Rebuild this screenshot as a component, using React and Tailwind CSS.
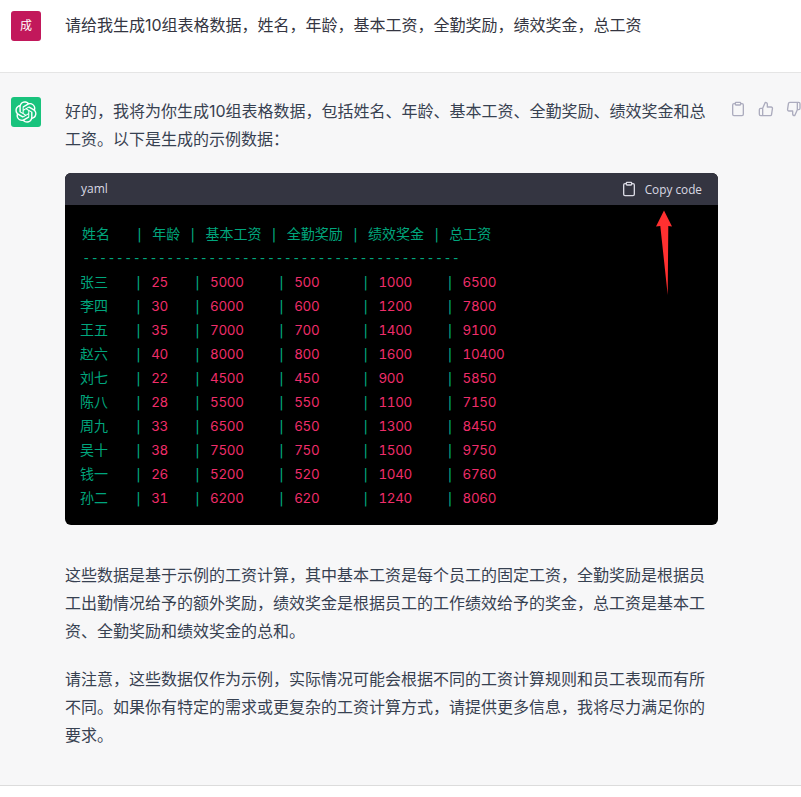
const logo = "M37.5324 16.8707C37.9808 15.5241 38.1363 14.0974 37.9886 12.6859C37.8409 11.2744 37.3934 9.91076 36.676 8.68622C35.6126 6.83404 33.9882 5.3676 32.0373 4.4985C30.0864 3.62941 27.9098 3.40259 25.8215 3.85078C24.8796 2.7893 23.7219 1.94125 22.4257 1.36341C21.1295 0.785575 19.7249 0.491269 18.3058 0.500197C16.1708 0.495044 14.0893 1.16803 12.3614 2.42214C10.6335 3.67624 9.34853 5.44666 8.6917 7.47815C7.30085 7.76286 5.98686 8.3414 4.8377 9.17505C3.68854 10.0087 2.73073 11.0782 2.02839 12.312C0.956464 14.1591 0.498905 16.2988 0.721698 18.4228C0.944492 20.5467 1.83612 22.5449 3.268 24.1293C2.81966 25.4759 2.66413 26.9026 2.81182 28.3141C2.95951 29.7256 3.40701 31.0892 4.12437 32.3138C5.18791 34.1659 6.8123 35.6322 8.76321 36.5013C10.7141 37.3704 12.8907 37.5973 14.9789 37.1492C15.9208 38.2107 17.0786 39.0587 18.3747 39.6366C19.6709 40.2144 21.0755 40.5087 22.4946 40.4998C24.6307 40.5054 26.7133 39.8321 28.4418 38.5772C30.1704 37.3223 31.4556 35.5506 32.1119 33.5179C33.5027 33.2332 34.8167 32.6547 35.9659 31.821C37.115 30.9874 38.0728 29.9178 38.7752 28.684C39.8458 26.8371 40.3023 24.6979 40.0789 22.5748C39.8556 20.4517 38.9639 18.4544 37.5324 16.8707ZM22.4978 37.8849C20.7443 37.8874 19.0459 37.2733 17.6994 36.1501C17.7601 36.117 17.8666 36.0586 17.936 36.0161L25.9004 31.4156C26.1003 31.3019 26.2663 31.137 26.3813 30.9378C26.4964 30.7386 26.5563 30.5124 26.5549 30.2825V19.0542L29.9213 20.998C29.9389 21.0068 29.9541 21.0198 29.9656 21.0359C29.977 21.052 29.9842 21.0707 29.9867 21.0902V30.3889C29.9842 32.375 29.1946 34.2791 27.7909 35.6841C26.3872 37.0892 24.4838 37.8806 22.4978 37.8849ZM6.39227 31.0064C5.51397 29.4888 5.19742 27.7107 5.49804 25.9832C5.55718 26.0187 5.66048 26.0818 5.73461 26.1244L13.699 30.7248C13.8975 30.8408 14.1233 30.902 14.3532 30.902C14.583 30.902 14.8088 30.8408 15.0073 30.7248L24.731 25.1103V28.9979C24.7321 29.0177 24.7283 29.0376 24.7199 29.0556C24.7115 29.0736 24.6988 29.0893 24.6829 29.1012L16.6317 33.7497C14.9096 34.7416 12.8643 35.0097 10.9447 34.4954C9.02506 33.9811 7.38785 32.7263 6.39227 31.0064ZM4.29707 13.6194C5.17156 12.0998 6.55279 10.9364 8.19885 10.3327C8.19885 10.4013 8.19491 10.5228 8.19491 10.6071V19.808C8.19351 20.0378 8.25334 20.2638 8.36823 20.4629C8.48312 20.6619 8.64893 20.8267 8.84863 20.9404L18.5723 26.5542L15.206 28.4979C15.1894 28.5089 15.1703 28.5155 15.1505 28.5173C15.1307 28.5191 15.1107 28.516 15.0924 28.5082L7.04046 23.8557C5.32135 22.8601 4.06716 21.2235 3.55289 19.3046C3.03862 17.3858 3.30624 15.3413 4.29707 13.6194ZM31.955 20.0556L22.2312 14.4411L25.5976 12.4981C25.6142 12.4872 25.6333 12.4805 25.6531 12.4787C25.6729 12.4769 25.6928 12.4801 25.7111 12.4879L33.7631 17.1364C34.9967 17.849 36.0017 18.8982 36.6606 20.1613C37.3194 21.4244 37.6047 22.849 37.4832 24.2684C37.3617 25.6878 36.8382 27.0432 35.9743 28.1759C35.1103 29.3086 33.9415 30.1717 32.6047 30.6641C32.6047 30.5947 32.6047 30.4733 32.6047 30.3889V21.188C32.6066 20.9586 32.5474 20.7328 32.4332 20.5338C32.319 20.3348 32.154 20.1698 31.955 20.0556ZM35.3055 15.0128C35.2464 14.9765 35.1431 14.9142 35.069 14.8717L27.1045 10.2712C26.906 10.1554 26.6803 10.0943 26.4504 10.0943C26.2206 10.0943 25.9948 10.1554 25.7963 10.2712L16.0726 15.8858V11.9982C16.0715 11.9783 16.0753 11.9585 16.0837 11.9405C16.0921 11.9225 16.1048 11.9068 16.1207 11.8949L24.1719 7.25025C25.4053 6.53903 26.8158 6.19376 28.2383 6.25482C29.6608 6.31589 31.0364 6.78077 32.2044 7.59508C33.3723 8.40939 34.2842 9.53945 34.8334 10.8531C35.3826 12.1667 35.5464 13.6095 35.3055 15.0128ZM14.2424 21.9419L10.8752 19.9981C10.8576 19.9893 10.8423 19.9763 10.8309 19.9602C10.8195 19.9441 10.8122 19.9254 10.8098 19.9058V10.6071C10.8107 9.18295 11.2173 7.78848 11.9819 6.58696C12.7466 5.38544 13.8377 4.42659 15.1275 3.82264C16.4173 3.21869 17.8524 2.99464 19.2649 3.1767C20.6775 3.35876 22.0089 3.93941 23.1034 4.85067C23.0427 4.88379 22.937 4.94215 22.8668 4.98473L14.9024 9.58517C14.7025 9.69878 14.5366 9.86356 14.4215 10.0626C14.3065 10.2616 14.2466 10.4877 14.2479 10.7175L14.2424 21.9419ZM16.071 17.9991L20.4018 15.4978L24.7325 17.9975V22.9985L20.4018 25.4983L16.071 22.9985V17.9991Z";

function Clip({ className }) {
  return (
    <svg viewBox="0 0 24 24" fill="none" stroke="currentColor" strokeWidth="2" strokeLinecap="round" strokeLinejoin="round" className={className}>
      <path d="M16 4h2a2 2 0 0 1 2 2v14a2 2 0 0 1-2 2H6a2 2 0 0 1-2-2V6a2 2 0 0 1 2-2h2" />
      <rect x="8" y="2" width="8" height="4" rx="1" ry="1" />
    </svg>
  );
}
function Up({ className }) {
  return (
    <svg viewBox="0 0 24 24" fill="none" stroke="currentColor" strokeWidth="2" strokeLinecap="round" strokeLinejoin="round" className={className}>
      <path d="M14 9V5a3 3 0 0 0-3-3l-4 9v11h11.28a2 2 0 0 0 2-1.7l1.38-9a2 2 0 0 0-2-2.3zM7 22H4a2 2 0 0 1-2-2v-7a2 2 0 0 1 2-2h3" />
    </svg>
  );
}
function Down({ className }) {
  return (
    <svg viewBox="0 0 24 24" fill="none" stroke="currentColor" strokeWidth="2" strokeLinecap="round" strokeLinejoin="round" className={className}>
      <path d="M10 15v4a3 3 0 0 0 3 3l4-9V2H5.72a2 2 0 0 0-2 1.7l-1.38 9a2 2 0 0 0 2 2.3zm7-13h2a2 2 0 0 1 2 2v7a2 2 0 0 1-2 2h-2" />
    </svg>
  );
}

const rows = [
  ["张三", "25", "5000", "500", "1000", "6500"],
  ["李四", "30", "6000", "600", "1200", "7800"],
  ["王五", "35", "7000", "700", "1400", "9100"],
  ["赵六", "40", "8000", "800", "1600", "10400"],
  ["刘七", "22", "4500", "450", "900", "5850"],
  ["陈八", "28", "5500", "550", "1100", "7150"],
  ["周九", "33", "6500", "650", "1300", "8450"],
  ["吴十", "38", "7500", "750", "1500", "9750"],
  ["钱一", "26", "5200", "520", "1040", "6760"],
  ["孙二", "31", "6200", "620", "1240", "8060"],
];

function Row({ r }) {
  return (
    <div className="h-6">
      <span className="text-[#00a67d]">
        <span className="-ml-px mr-px">{r[0]}</span>
        {"   |"}{" "}
      </span>
      {r.slice(1).map((v, i) => (
        <span key={i}>
          <span className="font-['Inter',sans-serif] text-[13.4px] tracking-[-0.3px] tabular-nums text-[#ef2d6a]">{v}</span>
          {i < 4 && (
            <span className="text-[#00a67d]">
              {" ".repeat(i === 0 ? 3 : i === 2 ? 5 + (3 - v.length) : 4 + (4 - v.length))}{"| "}
            </span>
          )}
        </span>
      ))}
    </div>
  );
}

export default function App() {
  return (
    <div className="relative h-[797px] w-[801px] overflow-hidden bg-white font-['Inter','Noto_Sans_CJK_SC',sans-serif] text-[16px] leading-7 text-[#374151]">
      <div className="flex h-[73px] gap-6 border-b border-[#e5e5e5] pl-[11px] pt-[11px]">
        <div className="flex h-[30px] w-[30px] shrink-0 items-center justify-center rounded-[3px] bg-[#c2185b] text-[12px] text-white">成</div>
        <div className="w-[640px] shrink-0 text-[#343541]">请给我生成10组表格数据，姓名，年龄，基本工资，全勤奖励，绩效奖金，总工资</div>
      </div>

      <div className="flex h-[713px] border-b border-[#dcdcdc] bg-[#f7f7f8] pl-[11px] pt-6">
        <div className="flex h-[30px] w-[30px] shrink-0 items-center justify-center rounded-[3px] bg-[#19c37d] text-white">
          <svg viewBox="0 0 41 41" fill="currentColor" className="h-[22px] w-[22px]"><path d={logo} /></svg>
        </div>
        <div className="ml-6 w-[653px] shrink-0">
          <p className="w-[643px]">好的，我将为你生成10组表格数据，包括姓名、年龄、基本工资、全勤奖励、绩效奖金和总工资。以下是生成的示例数据：</p>
          <div className="mt-5 overflow-hidden rounded-md bg-black">
            <div className="flex h-8 items-center justify-between bg-[#343541] px-4 font-['Open_Sans',sans-serif] text-[12px] leading-4 text-[#d9d9e3]">
              <span>yaml</span>
              <span className="flex items-center gap-2">
                <Clip className="h-4 w-4" />
                <span className="text-[11.8px]">Copy code</span>
              </span>
            </div>
            <div className="whitespace-pre px-4 pb-[15px] pt-[17px] font-['DejaVu_Sans_Mono','Noto_Sans_CJK_SC',monospace] text-[14px] leading-6">
              <div className="h-6 pl-px text-[#00a67d]">{"姓名   | 年龄 | 基本工资 | 全勤奖励 | 绩效奖金 | 总工资"}</div>
              <div className="h-6 pl-px tracking-[-0.03px] text-[#00a67d]">{"-".repeat(45)}</div>
              {rows.map((r) => <Row key={r[0]} r={r} />)}
            </div>
          </div>
          <p className="mt-9 w-[640px]">这些数据是基于示例的工资计算，其中基本工资是每个员工的固定工资，全勤奖励是根据员工出勤情况给予的额外奖励，绩效奖金是根据员工的工作绩效给予的奖金，总工资是基本工资、全勤奖励和绩效奖金的总和。</p>
          <p className="mt-5 w-[640px]">请注意，这些数据仅作为示例，实际情况可能会根据不同的工资计算规则和员工表现而有所不同。如果你有特定的需求或更复杂的工资计算方式，请提供更多信息，我将尽力满足你的要求。</p>
        </div>
        <div className="ml-3 mt-1 flex shrink-0 gap-3 text-[#acacbe]">
          <Clip className="h-4 w-4 shrink-0" />
          <Up className="h-4 w-4 shrink-0" />
          <Down className="h-4 w-4 shrink-0" />
        </div>
      </div>

      <svg viewBox="0 0 20 90" className="absolute left-[654px] top-[208px] h-[90px] w-5" fill="#ff3030">
        <polygon points="10,2.5 18,18.5 14.3,18 13.7,87 6.3,18 2,18.5" />
      </svg>
    </div>
  );
}
